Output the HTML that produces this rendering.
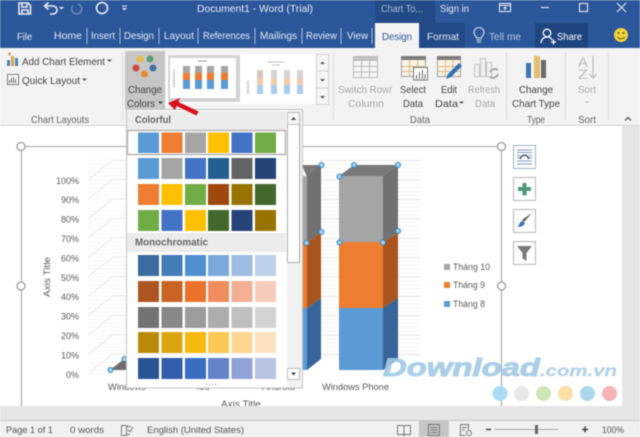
<!DOCTYPE html>
<html><head><meta charset="utf-8"><style>
html,body{margin:0;padding:0;background:#fff;width:640px;height:437px;overflow:hidden}
svg{display:block;filter:blur(.45px)}
text{font-family:"Liberation Sans",sans-serif;font-size:10.5px;fill:#444}
.t{fill:#e4eaf4}
.g{fill:#a8a8a8}
.s{font-size:9.5px;fill:#555}
.a{font-size:9px;fill:#595959}
</style></head><body>
<svg width="640" height="437" viewBox="0 0 640 437" xmlns="http://www.w3.org/2000/svg">
<defs>
<pattern id="minor" width="10" height="3.88" patternUnits="userSpaceOnUse" y="160"><rect width="10" height="1" fill="#f4f4f4"/></pattern>
</defs>
<!-- backgrounds -->
<rect width="640" height="437" fill="#fff"/>
<rect x="622" y="126" width="18" height="295" fill="#e6e6e6"/>
<rect y="406" width="640" height="15" fill="#e6e6e6"/>
<rect y="420" width="640" height="1" fill="#c8c8c8"/>
<rect y="421" width="640" height="16" fill="#f1f1f1"/>
<!-- title bar -->
<rect width="640" height="48" fill="#2b579a"/>
<rect x="375" y="0" width="60" height="24" fill="#224a86"/>
<rect x="420" y="23" width="45" height="25" fill="#224a86"/>
<rect x="535" y="23" width="53" height="25" fill="#1f4580"/>
<rect x="375" y="23" width="44" height="26" fill="#f3f3f3"/>
<!-- QAT -->
<g fill="none" stroke="#e8edf5" stroke-width="1.6">
<path d="M19 3h9l2.500 2.500V14H19z"/><path d="M22 3.500v3.500h5V3.500M22 14V10h6v4"/>
<path d="M46 6h7a3.500 3.500 0 0 1 0 8h-3M48.500 2.500L44.500 6l4 3.500"/>
<path d="M77.500 4a5 5 0 1 1-4.500 1.500" stroke="#6684b5"/>
<circle cx="102" cy="8" r="5.500"/>
</g>
<path d="M59 7l2.500 2.500L64 7z" fill="#e8edf5"/>
<path d="M122 5.500h5v1h-5zM122 8h5l-2.500 2.500z" fill="#e8edf5"/>
<text class="t" x="197" y="12" textLength="116" lengthAdjust="spacingAndGlyphs">Document1  -  Word (Trial)</text>
<text class="t" x="381" y="12" textLength="42" lengthAdjust="spacingAndGlyphs" style="fill:#a9bcd8">Chart To...</text>
<text class="t" x="440" y="12" textLength="29" lengthAdjust="spacingAndGlyphs">Sign in</text>
<!-- window controls -->
<g fill="none" stroke="#e4eaf4" stroke-width="1.100">
<rect x="499.500" y="3.500" width="11" height="8"/><path d="M499.500 5.500h11M505 10V7M503.500 8.500L505 7l1.500 1.500"/>
<path d="M541 7.500h8"/>
<rect x="579.500" y="3.500" width="8" height="8"/>
<path d="M617 3l9 9M626 3l-9 9"/>
</g>
<!-- tabs -->
<g class="tabs">
<text class="t" x="17" y="40" textLength="15" lengthAdjust="spacingAndGlyphs">File</text>
<text class="t" x="54" y="39" textLength="28" lengthAdjust="spacingAndGlyphs">Home</text>
<text class="t" x="91" y="39" textLength="24" lengthAdjust="spacingAndGlyphs">Insert</text>
<text class="t" x="124" y="39" textLength="30" lengthAdjust="spacingAndGlyphs">Design</text>
<text class="t" x="164" y="39" textLength="30" lengthAdjust="spacingAndGlyphs">Layout</text>
<text class="t" x="203" y="39" textLength="47" lengthAdjust="spacingAndGlyphs">References</text>
<text class="t" x="260" y="39" textLength="37" lengthAdjust="spacingAndGlyphs">Mailings</text>
<text class="t" x="306" y="39" textLength="31" lengthAdjust="spacingAndGlyphs">Review</text>
<text class="t" x="347" y="39" textLength="21" lengthAdjust="spacingAndGlyphs">View</text>
<text x="382" y="40" textLength="30" lengthAdjust="spacingAndGlyphs" style="fill:#2b579a">Design</text>
<text class="t" x="427" y="40" textLength="32" lengthAdjust="spacingAndGlyphs">Format</text>
<text class="t" x="489" y="40" textLength="32" lengthAdjust="spacingAndGlyphs" style="fill:#b5c6df">Tell me</text>
<text class="t" x="557" y="40" textLength="25" lengthAdjust="spacingAndGlyphs" style="fill:#fff">Share</text>
</g>
<path d="M87 28v16M120 28v16M159 28v16M198 28v16M255 28v16M302 28v16M341 28v16M372 28v16" stroke="#a9bcd8" stroke-width="1"/>
<g fill="none" stroke="#d5dfee" stroke-width="1.100">
<path d="M476.500 41h5M477 43h4M476.500 39c0-2-2.500-3-2.500-5.500a5 5 0 0 1 10 0c0 2.500-2.500 3.500-2.500 5.500z" transform="translate(0,-1)"/>
<g stroke="#fff" stroke-width="1.300"><circle cx="547" cy="33" r="3.800"/><path d="M541 43c.5-4 3-6 6-6s4 1 5 3M551 42h5M553.500 39.500v5"/></g>
</g>
<circle cx="621" cy="35" r="7" fill="#f3d33c"/>
<circle cx="618.500" cy="33" r="1" fill="#6a5a10"/><circle cx="623.500" cy="33" r="1" fill="#6a5a10"/>
<path d="M617.500 37c1.500 2.500 5.500 2.500 7 0" fill="none" stroke="#6a5a10"/>
<!-- ribbon -->
<rect y="48" width="640" height="77" fill="#f3f3f3"/>
<rect y="125" width="640" height="1" fill="#d4d4d4"/>
<path d="M122.500 52v68M333.500 52v68M506.500 52v68M565.500 52v68M608.500 52v68" stroke="#dcdcdc"/>
<!-- add chart element -->
<rect x="7" y="60" width="3" height="6" fill="#4d82bd"/><rect x="11" y="56" width="3" height="10" fill="#d9a441"/><rect x="15" y="58" width="3" height="8" fill="#4d82bd"/>
<path d="M8 54h3M9.500 52.500v3" stroke="#c8792d"/>
<text x="22" y="65" textLength="83" lengthAdjust="spacingAndGlyphs">Add Chart Element</text>
<path d="M107 59.500h5l-2.500 2.500z" fill="#555"/>
<rect x="7.500" y="74.500" width="11" height="10" fill="#fff" stroke="#777"/><path d="M9.500 83v-3M11.500 83v-5M13.500 83v-6M15.500 83v-4" stroke="#666"/>
<text x="22" y="84" textLength="58" lengthAdjust="spacingAndGlyphs">Quick Layout</text>
<path d="M82 78.500h5l-2.500 2.500z" fill="#555"/>
<text x="31" y="123" textLength="58" lengthAdjust="spacingAndGlyphs" style="fill:#666">Chart Layouts</text>
<!-- change colors -->
<rect x="125" y="51" width="40" height="58" fill="#c6c6c6"/>
<circle cx="140" cy="59" r="3.500" fill="#e9bd4b"/><circle cx="150" cy="59" r="3.500" fill="#5e9c76"/><circle cx="136" cy="68" r="3.500" fill="#cf4a3c"/><circle cx="153" cy="68" r="3.500" fill="#4472a8"/><circle cx="144.500" cy="74" r="3.500" fill="#e48a33"/>
<text x="128" y="93" textLength="34" lengthAdjust="spacingAndGlyphs">Change</text>
<text x="127" y="107" textLength="28" lengthAdjust="spacingAndGlyphs">Colors</text>
<path d="M158 101.500h5l-2.500 2.500z" fill="#444"/>
<!-- gallery -->
<rect x="166" y="54" width="150" height="50" fill="#fff"/>
<rect x="168" y="55" width="72" height="47" fill="#d2d2d2"/>
<rect x="170" y="58" width="66" height="40" fill="#fff"/>
<g>
<rect x="183" y="66" width="7" height="7" fill="#a5a5a5"/><rect x="183" y="73" width="7" height="7" fill="#ed7d31"/><rect x="183" y="80" width="7" height="9" fill="#5b9bd5"/>
<rect x="195" y="66" width="7" height="7" fill="#a5a5a5"/><rect x="195" y="73" width="7" height="7" fill="#ed7d31"/><rect x="195" y="80" width="7" height="9" fill="#5b9bd5"/>
<rect x="207" y="66" width="7" height="7" fill="#a5a5a5"/><rect x="207" y="73" width="7" height="7" fill="#ed7d31"/><rect x="207" y="80" width="7" height="9" fill="#5b9bd5"/>
<rect x="221" y="66" width="7" height="7" fill="#a5a5a5"/><rect x="221" y="73" width="7" height="7" fill="#ed7d31"/><rect x="221" y="80" width="7" height="9" fill="#5b9bd5"/>
<path d="M174 70v18" stroke="#aaa" stroke-width="2" stroke-dasharray="1 1"/>
<path d="M198 61h9" stroke="#999"/>
</g>
<g>
<rect x="257" y="70" width="6" height="8" fill="#d9c7bd"/><rect x="257" y="78" width="6" height="7" fill="#f3c9a8"/><rect x="257" y="85" width="6" height="9" fill="#a9cdec"/>
<rect x="271" y="70" width="6" height="8" fill="#d4d4d4"/><rect x="271" y="78" width="6" height="7" fill="#f3c9a8"/><rect x="271" y="85" width="6" height="9" fill="#a9cdec"/>
<rect x="284" y="70" width="6" height="8" fill="#d4d4d4"/><rect x="284" y="78" width="6" height="7" fill="#f3c9a8"/><rect x="284" y="85" width="6" height="9" fill="#a9cdec"/>
<rect x="297" y="70" width="6" height="8" fill="#d4d4d4"/><rect x="297" y="78" width="6" height="7" fill="#f3c9a8"/><rect x="297" y="85" width="6" height="9" fill="#a9cdec"/>
<path d="M248 81v13" stroke="#aaa" stroke-width="2" stroke-dasharray="1 1"/>
<path d="M268 62h16M272 65h8" stroke="#bbb"/>
</g>
<rect x="316.500" y="54.500" width="12" height="50" fill="#f7f7f7" stroke="#d0d0d0"/>
<path d="M316.500 71h12M316.500 88h12" stroke="#d0d0d0"/>
<path d="M320 64l2.500-2.500 2.500 2.500zM320 79h5l-2.500 2.500zM320 96h5l-2.500 2.500z" fill="#555"/>
<!-- switch row -->
<g fill="none" stroke="#b9b9b9">
<rect x="353.500" y="56.500" width="24" height="21" fill="#f7f7f7"/><rect x="353.500" y="56.500" width="24" height="4" fill="#c5c5c5"/>
<path d="M361.500 60.500v17M369.500 60.500v17M353.500 66.500h24M353.500 72h24"/>
</g>
<text class="g" x="338" y="93" textLength="54" lengthAdjust="spacingAndGlyphs">Switch Row/</text>
<text class="g" x="348" y="107" textLength="36" lengthAdjust="spacingAndGlyphs">Column</text>
<!-- select data -->
<rect x="401.500" y="56.500" width="24" height="20" fill="#fbf3e4" stroke="#a0a0a0"/><rect x="401" y="56" width="25" height="4" fill="#7d7d7d"/>
<path d="M409.500 60v16M417.500 60v16M401.500 66.500h24M401.500 71.500h24" stroke="#d6b98c"/>
<rect x="413.500" y="67.500" width="14" height="12.500" fill="#fff" stroke="#777"/><path d="M416.500 79v-4M419.500 79v-7M422.500 79v-9M425 79v-5" stroke="#666"/>
<text x="400" y="93" textLength="26" lengthAdjust="spacingAndGlyphs">Select</text>
<text x="403" y="107" textLength="20" lengthAdjust="spacingAndGlyphs">Data</text>
<!-- edit data -->
<rect x="437.500" y="56.500" width="23" height="20" fill="#fbf3e4" stroke="#a0a0a0"/><rect x="437" y="56" width="24" height="4" fill="#7d7d7d"/>
<path d="M445.500 60v16M453 60v16M437.500 66.500h23M437.500 71.500h23" stroke="#d6b98c"/>
<path d="M446 79l2-5 11-11 3 3-11 11z" fill="#2e75b6"/>
<text x="441" y="93" textLength="16" lengthAdjust="spacingAndGlyphs">Edit</text>
<text x="435" y="107" textLength="23" lengthAdjust="spacingAndGlyphs">Data</text>
<path d="M459 101.500h5l-2.500 2.500z" fill="#555"/>
<!-- refresh -->
<g fill="#f1f1f1" stroke="#c2c2c2"><rect x="474.500" y="64.500" width="5" height="12"/><rect x="480.500" y="58.500" width="5" height="18"/><rect x="486.500" y="62.500" width="5" height="14"/></g>
<path d="M490 72a5.500 5.500 0 0 1 8-2M498 74a5.500 5.500 0 0 1-8 3" fill="none" stroke="#aaa" stroke-width="2"/>
<text class="g" x="468" y="93" textLength="32" lengthAdjust="spacingAndGlyphs">Refresh</text>
<text class="g" x="475" y="107" textLength="20" lengthAdjust="spacingAndGlyphs">Data</text>
<text x="410" y="123" textLength="20" lengthAdjust="spacingAndGlyphs" style="fill:#666">Data</text>
<!-- chart type -->
<rect x="526" y="63" width="5" height="15" fill="#3f77ae"/><rect x="534" y="56" width="6" height="22" fill="#e6bd6a"/><rect x="541" y="60" width="5" height="18" fill="#6b6b6b"/>
<text x="519" y="93" textLength="34" lengthAdjust="spacingAndGlyphs">Change</text>
<text x="512" y="107" textLength="48" lengthAdjust="spacingAndGlyphs">Chart Type</text>
<text x="527" y="123" textLength="18" lengthAdjust="spacingAndGlyphs" style="fill:#666">Type</text>
<!-- sort -->
<text x="578" y="67" textLength="10" lengthAdjust="spacingAndGlyphs" style="font-size:14px;fill:#bdbdbd">A</text>
<text x="578" y="79" textLength="10" lengthAdjust="spacingAndGlyphs" style="font-size:14px;fill:#bdbdbd">Z</text>
<path d="M593 56v22M589.500 74l3.500 4 3.500-4" fill="none" stroke="#bdbdbd" stroke-width="1.200"/>
<text class="g" x="578" y="93" textLength="18" lengthAdjust="spacingAndGlyphs">Sort</text>
<path d="M585 101.500h4l-2 2z" fill="#bbb"/>
<text x="578" y="123" textLength="18" lengthAdjust="spacingAndGlyphs" style="fill:#666">Sort</text>
<path d="M625 120.500l3-3 3 3" fill="none" stroke="#555" stroke-width="1.300"/>
<!-- chart frame -->
<path d="M21.500 146.500H501.500V406M21.500 146.500V406" fill="none" stroke="#a3a3a3" stroke-width="1.100"/>
<!-- left wall -->
<rect x="88" y="160" width="40" height="215" fill="url(#minor)" opacity=".7"/>
<path d="M88 180l25-20h15M88 199.400l25-20h15M88 218.800l25-20h15M88 238.200l25-20h15M88 257.600l25-20h15M88 277l25-20h15M88 296.400l25-20h15M88 315.800l25-20h15M88 335.200l25-20h15M88 354.600l25-20h15M88 374l25-20h15" fill="none" stroke="#ebebeb"/>
<rect x="320" y="160" width="100" height="195" fill="url(#minor)"/>
<path d="M320 160.500h100M320 180h100M320 199.400h100M320 218.800h100M320 238.200h100M320 257.600h100M320 277h100M320 296.400h100M320 315.800h100M320 335.200h100M320 354.600h100" stroke="#e6e6e6"/>
<!-- y labels -->
<g class="a" text-anchor="end">
<text class="a" x="79" y="184">100%</text><text class="a" x="79" y="203">90%</text><text class="a" x="79" y="222.500">80%</text><text class="a" x="79" y="242">70%</text><text class="a" x="79" y="261.500">60%</text><text class="a" x="79" y="281">50%</text><text class="a" x="79" y="300">40%</text><text class="a" x="79" y="319.500">30%</text><text class="a" x="79" y="339">20%</text><text class="a" x="79" y="358.500">10%</text><text class="a" x="79" y="378">0%</text>
</g>
<text class="a" transform="translate(50,297) rotate(-90)" textLength="40" lengthAdjust="spacingAndGlyphs">Axis Title</text>
<!-- windows column -->
<path d="M110 370l14-11v11z" fill="#6e6e6e"/>
<path d="M124 359h4v11h-4z" fill="#6e6e6e"/>
<!-- android column -->
<path d="M302 176h5v66h-5z" fill="#a5a5a5"/><path d="M302 242h5v66h-5z" fill="#ed7d31"/><path d="M302 308h5v62h-5z" fill="#5b9bd5"/>
<path d="M302 165h19v11h-14.500z" fill="#7a7a7a"/>
<path d="M307 176l14-11v67l-14 11z" fill="#717171"/>
<path d="M307 243l14-11v66l-14 10z" fill="#a9551d"/>
<path d="M307 308l14-10v61l-14 11z" fill="#37649a"/>
<!-- WP column -->
<path d="M339 176l15-11h44l-15 11z" fill="#7a7a7a"/>
<rect x="339" y="176" width="44" height="66" fill="#a5a5a5"/>
<rect x="339" y="242" width="44" height="66" fill="#ed7d31"/>
<rect x="339" y="308" width="44" height="62" fill="#5b9bd5"/>
<path d="M383 176l15-11v68l-15 9z" fill="#717171"/>
<path d="M383 242l15-9v65l-15 10z" fill="#a9551d"/>
<path d="M383 308l15-10v61l-15 11z" fill="#37649a"/>
<!-- handles -->
<g fill="#9fd0f0" stroke="#3b84bd" stroke-width="1">
<circle cx="110.500" cy="370" r="2.500"/><circle cx="124.500" cy="359" r="2.500"/>
<circle cx="321.500" cy="165" r="2.500"/><circle cx="354" cy="165" r="2.500"/><circle cx="398" cy="165" r="2.500"/><circle cx="339.500" cy="176.500" r="2.500"/>
<circle cx="321.500" cy="232" r="2.500"/><circle cx="398" cy="231" r="2.500"/><circle cx="306.500" cy="243" r="2.500"/><circle cx="339.500" cy="242.500" r="2.500"/><circle cx="383" cy="242.500" r="2.500"/>
</g>
<!-- x labels -->
<text class="a" x="108" y="390" textLength="38" lengthAdjust="spacingAndGlyphs">Windows</text>
<text class="a" x="197" y="390" textLength="13" lengthAdjust="spacingAndGlyphs">iOS</text>
<text class="a" x="262" y="390" textLength="33" lengthAdjust="spacingAndGlyphs">Android</text>
<text class="a" x="322" y="390" textLength="67" lengthAdjust="spacingAndGlyphs">Windows Phone</text>
<text class="a" x="221" y="407" textLength="40" lengthAdjust="spacingAndGlyphs">Axis Title</text>
<rect y="406" x="0" width="622" height="14" fill="#e6e6e6"/>
<path d="M21.500 406V420" stroke="#a3a3a3" opacity="0"/>
<!-- legend -->
<rect x="444" y="264" width="6" height="6" fill="#a5a5a5"/><text class="a" x="453" y="270" textLength="37" lengthAdjust="spacingAndGlyphs">Tháng 10</text>
<rect x="444" y="282" width="6" height="6" fill="#ed7d31"/><text class="a" x="453" y="288" textLength="32" lengthAdjust="spacingAndGlyphs">Tháng 9</text>
<rect x="444" y="301" width="6" height="6" fill="#5b9bd5"/><text class="a" x="453" y="307" textLength="32" lengthAdjust="spacingAndGlyphs">Tháng 8</text>
<!-- frame handles -->
<g fill="#fff" stroke="#9a9a9a" stroke-width="1.300">
<circle cx="21" cy="146.500" r="4"/><circle cx="21" cy="286" r="4"/><circle cx="501.500" cy="146.500" r="4"/><circle cx="501.500" cy="286" r="4"/>
</g>
<!-- side tools -->
<g fill="#fdfdfd" stroke="#b5b5b5">
<rect x="513.500" y="145.500" width="22" height="23" stroke="#9fb4cc"/><rect x="513.500" y="177.500" width="22" height="23"/><rect x="513.500" y="209.500" width="22" height="23"/><rect x="513.500" y="241.500" width="22" height="23"/>
</g>
<path d="M517 150h15M517 152.500h15M517 161h15M517 164h15M517 155.500h3M529 155.500h3M517 158h3M529 158h3" stroke="#7e9cc0"/>
<path d="M520.500 159c0-5 8-5 8 0" fill="none" stroke="#44546a" stroke-width="1.500"/>
<path d="M522.500 183h4v4h4.500v4h-4.500v4.500h-4V191H518v-4h4.500z" fill="#4e9a78"/>
<path d="M532 213l-8 9-2-2z" fill="#555"/><path d="M517 227c2 0 2-5 5-6l3 2c-1 3-4 4-8 4z" fill="#3e79b8"/>
<path d="M517 246h15l-5.500 7v8l-4-2.500V253z" fill="#7a7a7a"/>
<!-- dropdown -->
<rect x="126.500" y="109.500" width="176" height="278.500" fill="#fff" stroke="#c4c4c4"/>
<rect x="127" y="111" width="159" height="19" fill="#ececec"/>
<text x="135" y="123" textLength="36" lengthAdjust="spacingAndGlyphs" style="font-weight:bold;fill:#666">Colorful</text>
<rect x="127.500" y="130.500" width="158" height="24" fill="#fff" stroke="#b5b5b5" stroke-width="1.500"/>
<rect x="127" y="233" width="159" height="19" fill="#ececec"/>
<text x="135" y="245.500" textLength="73" lengthAdjust="spacingAndGlyphs" style="font-weight:bold;fill:#666">Monochromatic</text>
<!-- swatches -->
<g>
<rect x="138" y="132.500" width="21" height="20.500" fill="#5b9bd5"/><rect x="161.500" y="132.500" width="21" height="20.500" fill="#ed7d31"/><rect x="185" y="132.500" width="21" height="20.500" fill="#a5a5a5"/><rect x="208" y="132.500" width="21" height="20.500" fill="#ffc000"/><rect x="231.500" y="132.500" width="21" height="20.500" fill="#4472c4"/><rect x="255" y="132.500" width="21" height="20.500" fill="#70ad47"/>
<rect x="138" y="158" width="21" height="21" fill="#5b9bd5"/><rect x="161.500" y="158" width="21" height="21" fill="#a5a5a5"/><rect x="185" y="158" width="21" height="21" fill="#4472c4"/><rect x="208" y="158" width="21" height="21" fill="#255e91"/><rect x="231.500" y="158" width="21" height="21" fill="#636363"/><rect x="255" y="158" width="21" height="21" fill="#264478"/>
<rect x="138" y="184" width="21" height="21" fill="#ed7d31"/><rect x="161.500" y="184" width="21" height="21" fill="#ffc000"/><rect x="185" y="184" width="21" height="21" fill="#70ad47"/><rect x="208" y="184" width="21" height="21" fill="#9e480e"/><rect x="231.500" y="184" width="21" height="21" fill="#997300"/><rect x="255" y="184" width="21" height="21" fill="#43682b"/>
<rect x="138" y="210" width="21" height="21" fill="#70ad47"/><rect x="161.500" y="210" width="21" height="21" fill="#4472c4"/><rect x="185" y="210" width="21" height="21" fill="#ffc000"/><rect x="208" y="210" width="21" height="21" fill="#43682b"/><rect x="231.500" y="210" width="21" height="21" fill="#264478"/><rect x="255" y="210" width="21" height="21" fill="#997300"/>
<rect x="138" y="255" width="21" height="21" fill="#3a6c9e"/><rect x="161.500" y="255" width="21" height="21" fill="#447cb8"/><rect x="185" y="255" width="21" height="21" fill="#4f8fce"/><rect x="208" y="255" width="21" height="21" fill="#7ca9dc"/><rect x="231.500" y="255" width="21" height="21" fill="#9dbde3"/><rect x="255" y="255" width="21" height="21" fill="#bdd0ea"/>
<rect x="138" y="281" width="21" height="21" fill="#ac5520"/><rect x="161.500" y="281" width="21" height="21" fill="#ca6424"/><rect x="185" y="281" width="21" height="21" fill="#ea722a"/><rect x="208" y="281" width="21" height="21" fill="#f08d5e"/><rect x="231.500" y="281" width="21" height="21" fill="#f4ae94"/><rect x="255" y="281" width="21" height="21" fill="#f7cbbb"/>
<rect x="138" y="307" width="21" height="21" fill="#737373"/><rect x="161.500" y="307" width="21" height="21" fill="#888"/><rect x="185" y="307" width="21" height="21" fill="#9c9c9c"/><rect x="208" y="307" width="21" height="21" fill="#adadad"/><rect x="231.500" y="307" width="21" height="21" fill="#bfbfbf"/><rect x="255" y="307" width="21" height="21" fill="#d3d3d3"/>
<rect x="138" y="332" width="21" height="21" fill="#b88a0a"/><rect x="161.500" y="332" width="21" height="21" fill="#dca50d"/><rect x="185" y="332" width="21" height="21" fill="#f6b90f"/><rect x="208" y="332" width="21" height="21" fill="#fcc854"/><rect x="231.500" y="332" width="21" height="21" fill="#fdd691"/><rect x="255" y="332" width="21" height="21" fill="#fde2c0"/>
<rect x="138" y="358" width="21" height="21" fill="#2a5394"/><rect x="161.500" y="358" width="21" height="21" fill="#315fab"/><rect x="185" y="358" width="21" height="21" fill="#3a6dc2"/><rect x="208" y="358" width="21" height="21" fill="#6482c8"/><rect x="231.500" y="358" width="21" height="21" fill="#8fa3d6"/><rect x="255" y="358" width="21" height="21" fill="#b7c4e4"/>
</g>
<path d="M206 384.500h1M209 384.500h1M212 384.500h1M215 384.500h1" stroke="#888"/>
<!-- scrollbar -->
<rect x="287" y="110" width="15" height="277.500" fill="#f1f1f1"/>
<rect x="287.500" y="124.500" width="12" height="138" fill="#fff" stroke="#aaa"/>
<rect x="287.500" y="112.500" width="12" height="12" fill="#f5f5f5" stroke="#bbb"/>
<rect x="287.500" y="368.500" width="12" height="11" fill="#fff" stroke="#bbb"/>
<path d="M291 120l2.500-3 2.500 3zM291 372.500h5l-2.500 3z" fill="#444"/>
<!-- red arrow -->
<path d="M168 103l12-5-1.500 4 20 9.500-2 4-20-9.500-1.500 4z" fill="#d8101f"/>
<!-- watermark -->
<text x="383" y="376" textLength="157" lengthAdjust="spacingAndGlyphs" style="font-size:25px;font-weight:bold;font-style:italic;fill:#a3cae6;opacity:.9;stroke:#a3cae6;stroke-width:1">Download</text>
<text x="540" y="376" textLength="77" lengthAdjust="spacingAndGlyphs" style="font-size:16px;font-weight:bold;font-style:italic;fill:#b3d3e9;stroke:#b3d3e9;stroke-width:.3">.com.vn</text>
<circle cx="500" cy="393.500" r="7.500" fill="#a9dcf3"/><circle cx="521.500" cy="393.500" r="7.500" fill="#e8e8e8"/><circle cx="543.500" cy="393.500" r="7.500" fill="#cfe6b6"/><circle cx="565.500" cy="393.500" r="7.500" fill="#fbdfa5"/><circle cx="587.500" cy="393.500" r="7.500" fill="#acd5ee"/><circle cx="609.500" cy="393.500" r="7.500" fill="#f7b3b5"/>
<!-- status bar -->
<text class="s" x="6" y="433" textLength="47" lengthAdjust="spacingAndGlyphs">Page 1 of 1</text>
<text class="s" x="70" y="433" textLength="34" lengthAdjust="spacingAndGlyphs">0 words</text>
<path d="M121.500 425.500h5v10h-5zM127 426.500h4M127 434.500h3" fill="none" stroke="#777"/><path d="M128 430l2 2 3-5" fill="none" stroke="#777"/>
<text class="s" x="147" y="433" textLength="97" lengthAdjust="spacingAndGlyphs">English (United States)</text>
<rect x="419" y="421" width="30" height="16" fill="#c6c6c6"/>
<path d="M397.500 425.500h5.500l1 1 1-1h5.500v9h-5.500l-1 1-1-1h-5.500zM404 426v9" fill="none" stroke="#777"/>
<path d="M428.500 424.500h11v11h-11zM430.500 427.500h7M430.500 430h7M430.500 432.500h7" fill="none" stroke="#777"/>
<path d="M460.500 424.500h8v5M460.500 424.500v11h5M462 427.500h5M462 430h3" fill="none" stroke="#777"/><circle cx="469" cy="433" r="2.500" fill="none" stroke="#777"/>
<path d="M486 429.500h5" stroke="#444" stroke-width="1.500"/>
<path d="M495 429.500h63" stroke="#aaa"/>
<rect x="535" y="425" width="3" height="9" fill="#666"/>
<path d="M582 429.500h6M585 426.500v6" stroke="#444" stroke-width="1.500"/>
<text class="s" x="602" y="433" textLength="22" lengthAdjust="spacingAndGlyphs">100%</text>
</svg>
</body></html>
